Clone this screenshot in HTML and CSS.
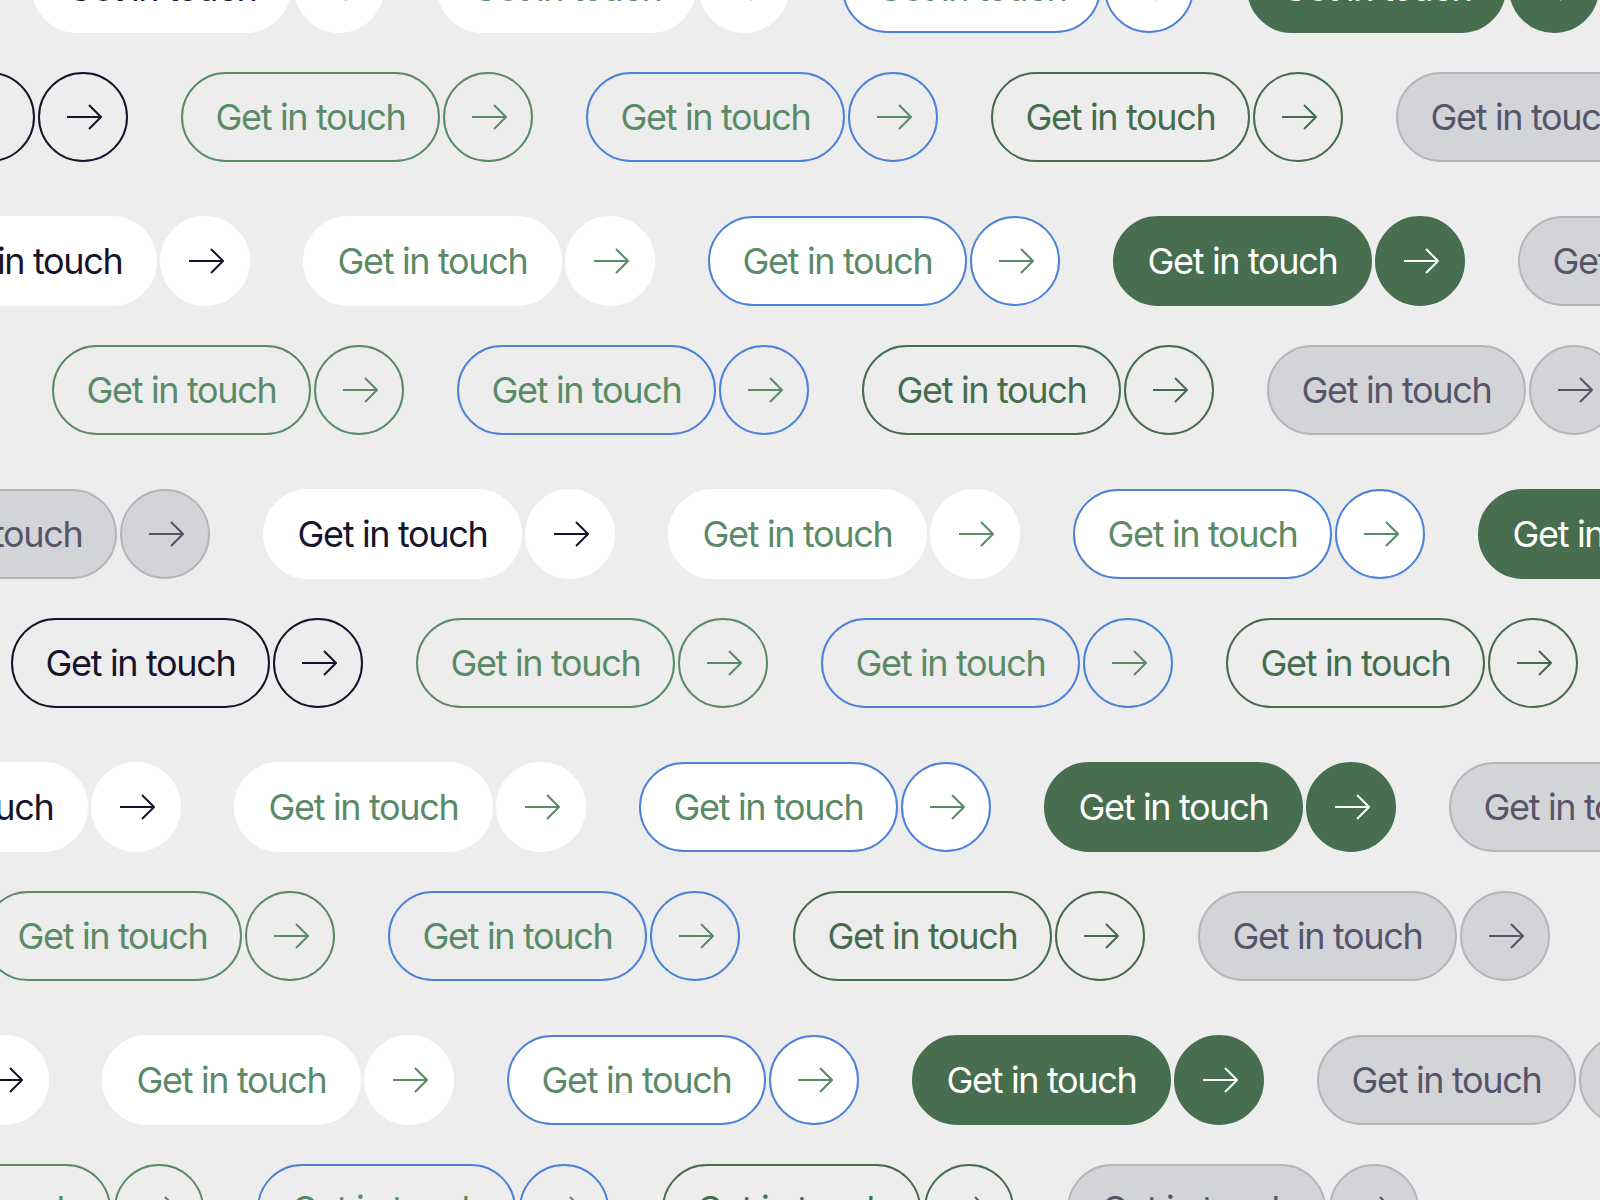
FILE: index.html
```html
<!DOCTYPE html>
<html lang="en">
<head>
<meta charset="utf-8">
<title>Get in touch buttons</title>
<link rel="stylesheet" href="styles.css">
</head>
<body>
<main class="canvas">
  <section class="pair">
    <div class="row r0">
      <div class="btn s-e"><span class="pill">Get in touch</span><span class="circ"><svg viewBox="0 0 36 26"><path d="M1 13H35M23 1l12 12-12 12"/></svg></span></div>
      <div class="btn s-f"><span class="pill">Get in touch</span><span class="circ"><svg viewBox="0 0 36 26"><path d="M1 13H35M23 1l12 12-12 12"/></svg></span></div>
      <div class="btn s-g"><span class="pill">Get in touch</span><span class="circ"><svg viewBox="0 0 36 26"><path d="M1 13H35M23 1l12 12-12 12"/></svg></span></div>
      <div class="btn s-h"><span class="pill">Get in touch</span><span class="circ"><svg viewBox="0 0 36 26"><path d="M1 13H35M23 1l12 12-12 12"/></svg></span></div>
      <div class="btn s-i"><span class="pill">Get in touch</span><span class="circ"><svg viewBox="0 0 36 26"><path d="M1 13H35M23 1l12 12-12 12"/></svg></span></div>
    </div>
    <div class="row r1">
      <div class="btn s-a"><span class="pill">Get in touch</span><span class="circ"><svg viewBox="0 0 36 26"><path d="M1 13H35M23 1l12 12-12 12"/></svg></span></div>
      <div class="btn s-b"><span class="pill">Get in touch</span><span class="circ"><svg viewBox="0 0 36 26"><path d="M1 13H35M23 1l12 12-12 12"/></svg></span></div>
      <div class="btn s-c"><span class="pill">Get in touch</span><span class="circ"><svg viewBox="0 0 36 26"><path d="M1 13H35M23 1l12 12-12 12"/></svg></span></div>
      <div class="btn s-d"><span class="pill">Get in touch</span><span class="circ"><svg viewBox="0 0 36 26"><path d="M1 13H35M23 1l12 12-12 12"/></svg></span></div>
      <div class="btn s-e"><span class="pill">Get in touch</span><span class="circ"><svg viewBox="0 0 36 26"><path d="M1 13H35M23 1l12 12-12 12"/></svg></span></div>
    </div>
  </section>
  <section class="pair">
    <div class="row r2">
      <div class="btn s-e"><span class="pill">Get in touch</span><span class="circ"><svg viewBox="0 0 36 26"><path d="M1 13H35M23 1l12 12-12 12"/></svg></span></div>
      <div class="btn s-f"><span class="pill">Get in touch</span><span class="circ"><svg viewBox="0 0 36 26"><path d="M1 13H35M23 1l12 12-12 12"/></svg></span></div>
      <div class="btn s-g"><span class="pill">Get in touch</span><span class="circ"><svg viewBox="0 0 36 26"><path d="M1 13H35M23 1l12 12-12 12"/></svg></span></div>
      <div class="btn s-h"><span class="pill">Get in touch</span><span class="circ"><svg viewBox="0 0 36 26"><path d="M1 13H35M23 1l12 12-12 12"/></svg></span></div>
      <div class="btn s-i"><span class="pill">Get in touch</span><span class="circ"><svg viewBox="0 0 36 26"><path d="M1 13H35M23 1l12 12-12 12"/></svg></span></div>
      <div class="btn s-e"><span class="pill">Get in touch</span><span class="circ"><svg viewBox="0 0 36 26"><path d="M1 13H35M23 1l12 12-12 12"/></svg></span></div>
    </div>
    <div class="row r3">
      <div class="btn s-a"><span class="pill">Get in touch</span><span class="circ"><svg viewBox="0 0 36 26"><path d="M1 13H35M23 1l12 12-12 12"/></svg></span></div>
      <div class="btn s-b"><span class="pill">Get in touch</span><span class="circ"><svg viewBox="0 0 36 26"><path d="M1 13H35M23 1l12 12-12 12"/></svg></span></div>
      <div class="btn s-c"><span class="pill">Get in touch</span><span class="circ"><svg viewBox="0 0 36 26"><path d="M1 13H35M23 1l12 12-12 12"/></svg></span></div>
      <div class="btn s-d"><span class="pill">Get in touch</span><span class="circ"><svg viewBox="0 0 36 26"><path d="M1 13H35M23 1l12 12-12 12"/></svg></span></div>
      <div class="btn s-e"><span class="pill">Get in touch</span><span class="circ"><svg viewBox="0 0 36 26"><path d="M1 13H35M23 1l12 12-12 12"/></svg></span></div>
    </div>
  </section>
  <section class="pair">
    <div class="row r4">
      <div class="btn s-e"><span class="pill">Get in touch</span><span class="circ"><svg viewBox="0 0 36 26"><path d="M1 13H35M23 1l12 12-12 12"/></svg></span></div>
      <div class="btn s-f"><span class="pill">Get in touch</span><span class="circ"><svg viewBox="0 0 36 26"><path d="M1 13H35M23 1l12 12-12 12"/></svg></span></div>
      <div class="btn s-g"><span class="pill">Get in touch</span><span class="circ"><svg viewBox="0 0 36 26"><path d="M1 13H35M23 1l12 12-12 12"/></svg></span></div>
      <div class="btn s-h"><span class="pill">Get in touch</span><span class="circ"><svg viewBox="0 0 36 26"><path d="M1 13H35M23 1l12 12-12 12"/></svg></span></div>
      <div class="btn s-i"><span class="pill">Get in touch</span><span class="circ"><svg viewBox="0 0 36 26"><path d="M1 13H35M23 1l12 12-12 12"/></svg></span></div>
    </div>
    <div class="row r5">
      <div class="btn s-a"><span class="pill">Get in touch</span><span class="circ"><svg viewBox="0 0 36 26"><path d="M1 13H35M23 1l12 12-12 12"/></svg></span></div>
      <div class="btn s-b"><span class="pill">Get in touch</span><span class="circ"><svg viewBox="0 0 36 26"><path d="M1 13H35M23 1l12 12-12 12"/></svg></span></div>
      <div class="btn s-c"><span class="pill">Get in touch</span><span class="circ"><svg viewBox="0 0 36 26"><path d="M1 13H35M23 1l12 12-12 12"/></svg></span></div>
      <div class="btn s-d"><span class="pill">Get in touch</span><span class="circ"><svg viewBox="0 0 36 26"><path d="M1 13H35M23 1l12 12-12 12"/></svg></span></div>
    </div>
  </section>
  <section class="pair">
    <div class="row r6">
      <div class="btn s-e"><span class="pill">Get in touch</span><span class="circ"><svg viewBox="0 0 36 26"><path d="M1 13H35M23 1l12 12-12 12"/></svg></span></div>
      <div class="btn s-f"><span class="pill">Get in touch</span><span class="circ"><svg viewBox="0 0 36 26"><path d="M1 13H35M23 1l12 12-12 12"/></svg></span></div>
      <div class="btn s-g"><span class="pill">Get in touch</span><span class="circ"><svg viewBox="0 0 36 26"><path d="M1 13H35M23 1l12 12-12 12"/></svg></span></div>
      <div class="btn s-h"><span class="pill">Get in touch</span><span class="circ"><svg viewBox="0 0 36 26"><path d="M1 13H35M23 1l12 12-12 12"/></svg></span></div>
      <div class="btn s-i"><span class="pill">Get in touch</span><span class="circ"><svg viewBox="0 0 36 26"><path d="M1 13H35M23 1l12 12-12 12"/></svg></span></div>
      <div class="btn s-e"><span class="pill">Get in touch</span><span class="circ"><svg viewBox="0 0 36 26"><path d="M1 13H35M23 1l12 12-12 12"/></svg></span></div>
    </div>
    <div class="row r7">
      <div class="btn s-a"><span class="pill">Get in touch</span><span class="circ"><svg viewBox="0 0 36 26"><path d="M1 13H35M23 1l12 12-12 12"/></svg></span></div>
      <div class="btn s-b"><span class="pill">Get in touch</span><span class="circ"><svg viewBox="0 0 36 26"><path d="M1 13H35M23 1l12 12-12 12"/></svg></span></div>
      <div class="btn s-c"><span class="pill">Get in touch</span><span class="circ"><svg viewBox="0 0 36 26"><path d="M1 13H35M23 1l12 12-12 12"/></svg></span></div>
      <div class="btn s-d"><span class="pill">Get in touch</span><span class="circ"><svg viewBox="0 0 36 26"><path d="M1 13H35M23 1l12 12-12 12"/></svg></span></div>
      <div class="btn s-e"><span class="pill">Get in touch</span><span class="circ"><svg viewBox="0 0 36 26"><path d="M1 13H35M23 1l12 12-12 12"/></svg></span></div>
    </div>
  </section>
  <section class="pair">
    <div class="row r8">
      <div class="btn s-e"><span class="pill">Get in touch</span><span class="circ"><svg viewBox="0 0 36 26"><path d="M1 13H35M23 1l12 12-12 12"/></svg></span></div>
      <div class="btn s-f"><span class="pill">Get in touch</span><span class="circ"><svg viewBox="0 0 36 26"><path d="M1 13H35M23 1l12 12-12 12"/></svg></span></div>
      <div class="btn s-g"><span class="pill">Get in touch</span><span class="circ"><svg viewBox="0 0 36 26"><path d="M1 13H35M23 1l12 12-12 12"/></svg></span></div>
      <div class="btn s-h"><span class="pill">Get in touch</span><span class="circ"><svg viewBox="0 0 36 26"><path d="M1 13H35M23 1l12 12-12 12"/></svg></span></div>
      <div class="btn s-i"><span class="pill">Get in touch</span><span class="circ"><svg viewBox="0 0 36 26"><path d="M1 13H35M23 1l12 12-12 12"/></svg></span></div>
      <div class="btn s-e"><span class="pill">Get in touch</span><span class="circ"><svg viewBox="0 0 36 26"><path d="M1 13H35M23 1l12 12-12 12"/></svg></span></div>
    </div>
    <div class="row r9">
      <div class="btn s-a"><span class="pill">Get in touch</span><span class="circ"><svg viewBox="0 0 36 26"><path d="M1 13H35M23 1l12 12-12 12"/></svg></span></div>
      <div class="btn s-b"><span class="pill">Get in touch</span><span class="circ"><svg viewBox="0 0 36 26"><path d="M1 13H35M23 1l12 12-12 12"/></svg></span></div>
      <div class="btn s-c"><span class="pill">Get in touch</span><span class="circ"><svg viewBox="0 0 36 26"><path d="M1 13H35M23 1l12 12-12 12"/></svg></span></div>
      <div class="btn s-d"><span class="pill">Get in touch</span><span class="circ"><svg viewBox="0 0 36 26"><path d="M1 13H35M23 1l12 12-12 12"/></svg></span></div>
      <div class="btn s-e"><span class="pill">Get in touch</span><span class="circ"><svg viewBox="0 0 36 26"><path d="M1 13H35M23 1l12 12-12 12"/></svg></span></div>
    </div>
  </section>
</main>
</body>
</html>
```

FILE: styles.css
```css
* { box-sizing: border-box; }

html, body {
  margin: 0;
  padding: 0;
  width: 1600px;
  height: 1200px;
  overflow: hidden;
  background: #ededed;
}

.canvas {
  display: flex;
  flex-direction: column;
  gap: 54px;
  margin-top: -57px;
  font-family: "Inter", "Noto Sans", sans-serif;
}

.pair {
  display: flex;
  flex-direction: column;
  gap: 39px;
}

.row {
  display: flex;
  gap: 53px;
  flex-wrap: nowrap;
}

.r0 { margin-left: -373px; }
.r1 { margin-left: -224px; }
.r2 { margin-left: -507px; }
.r3 { margin-left: -353px; }
.r4 { margin-left: -142px; }
.r5 { margin-left: 11px; }
.r6 { margin-left: -576px; }
.r7 { margin-left: -422px; }
.r8 { margin-left: -708px; }
.r9 { margin-left: -553px; }

.btn {
  display: flex;
  gap: 3px;
  flex-shrink: 0;
  color: var(--fg);
}

.pill,
.circ {
  display: flex;
  align-items: center;
  justify-content: center;
  height: 90px;
  background: var(--bg);
  border: 2px solid var(--bd);
  flex-shrink: 0;
}

.pill {
  width: 259px;
  border-radius: 45px;
  font-size: 36px;
  line-height: 1;
  letter-spacing: -1.35px;
  font-weight: 400;
  white-space: nowrap;
}

.circ {
  width: 90px;
  border-radius: 50%;
}

.circ svg {
  width: 36px;
  height: 26px;
  fill: none;
  stroke: currentColor;
  stroke-width: 2;
  stroke-linecap: butt;
  stroke-linejoin: miter;
  margin-left: 1px;
}

/* A: navy outline */
.s-a { --bg: transparent; --bd: #17132c; --fg: #17132c; }
/* B: green outline */
.s-b { --bg: transparent; --bd: #5b8a66; --fg: #5b8a66; }
/* C: blue outline, green text */
.s-c { --bg: transparent; --bd: #4c82da; --fg: #5b8a66; }
/* D: dark green outline */
.s-d { --bg: transparent; --bd: #456d4d; --fg: #456d4d; }
/* E: gray filled */
.s-e { --bg: #d3d4d8; --bd: #b5b5bc; --fg: #57546a; }
/* F: white, navy text */
.s-f { --bg: #ffffff; --bd: #ffffff; --fg: #17132c; }
/* G: white, green text */
.s-g { --bg: #ffffff; --bd: #ffffff; --fg: #5b8a66; }
/* H: white, blue outline, green text */
.s-h { --bg: #ffffff; --bd: #4c82da; --fg: #5b8a66; }
/* I: dark green filled */
.s-i { --bg: #476e4f; --bd: #476e4f; --fg: #ffffff; }
```
